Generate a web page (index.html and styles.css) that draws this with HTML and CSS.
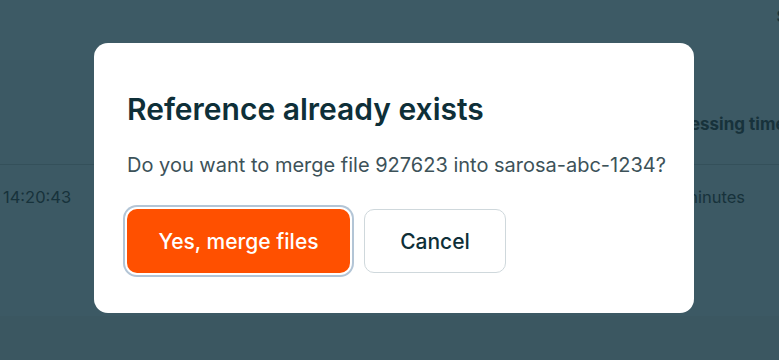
FILE: index.html
```html
<!DOCTYPE html>
<html lang="en">
<head>
    <meta charset="UTF-8">
    <meta name="viewport" content="width=device-width, initial-scale=1.0">
    <title>Files</title>
    <link rel="stylesheet" href="styles.css">
</head>
<body>
    <div class="page">
        <div class="topbar"><span class="topbar-label">S</span></div>
        <div class="table-head">
            <span class="head-cell">Processing time</span>
        </div>
        <div class="table-row">
            <span class="cell-time">14:20:43</span>
            <span class="cell-duration">2 minutes</span>
        </div>
        <div class="page-rest"></div>
    </div>

    <div class="overlay">
        <div class="modal">
            <h2 class="modal-title">Reference already exists</h2>
            <p class="modal-text">Do you want to merge file 927623 into sarosa-abc-1234?</p>
            <div class="modal-actions">
                <button class="btn btn-primary">Yes, merge files</button>
                <button class="btn btn-secondary">Cancel</button>
            </div>
        </div>
    </div>
</body>
</html>
```

FILE: styles.css
```css
body {
    margin: 0;
    font-family: Inter, "Noto Sans", sans-serif;
    background-color: #3c5964;
    width: 779px;
    height: 360px;
    overflow: hidden;
    position: relative;
}
.page {
    display: flex;
    flex-direction: column;
    height: 360px;
    color: #17323b;
    white-space: nowrap;
}
.topbar {
    height: 60px;
    background-color: #3d5a65;
    display: flex;
    justify-content: flex-end;
}
.topbar-label {
    font-size: 16px;
    font-weight: 600;
    margin-right: -8px;
    margin-top: 6px;
}
.table-head {
    height: 104px;
    background-color: #3c5964;
    border-bottom: 1px solid #34505a;
    display: flex;
    align-items: center;
    padding-left: 652px;
}
.head-cell {
    font-size: 17px;
    font-weight: 700;
    margin-top: 24px;
}
.table-row {
    height: 151px;
    display: flex;
    justify-content: space-between;
    font-size: 16.5px;
    padding-top: 22px;
    box-sizing: border-box;
}
.cell-time {
    margin-left: 3px;
}
.cell-duration {
    margin-right: 34px;
}
.page-rest {
    flex: 1;
    background-color: #3b5761;
}
.overlay {
    position: absolute;
    inset: 0;
    display: flex;
    align-items: flex-start;
    justify-content: center;
    padding-top: 43px;
    padding-left: 9px;
    box-sizing: border-box;
}
.modal {
    width: 600px;
    height: 270px;
    box-sizing: border-box;
    background: white;
    border-radius: 14px;
    padding: 46px 33px 0;
}
.modal-title {
    margin: 0;
    font-size: 30px;
    font-weight: 600;
    color: #0e2f38;
    line-height: 40px;
}
.modal-text {
    margin: 23px 0 0;
    font-size: 20px;
    line-height: 26px;
    color: #3d5259;
    white-space: nowrap;
}
.modal-actions {
    display: flex;
    gap: 14px;
    margin-top: 31px;
}
.btn {
    font-family: inherit;
    font-size: 21px;
    font-weight: 500;
    height: 64px;
    border-radius: 10px;
    cursor: pointer;
}
.btn-primary {
    width: 223px;
    background-color: #ff5000;
    color: white;
    border: none;
    box-shadow: 0 0 0 2px white, 0 0 0 4px #b3c5d6;
}
.btn-secondary {
    width: 142px;
    background: white;
    color: #0e2f38;
    border: 1px solid #cfd8dc;
}
```
